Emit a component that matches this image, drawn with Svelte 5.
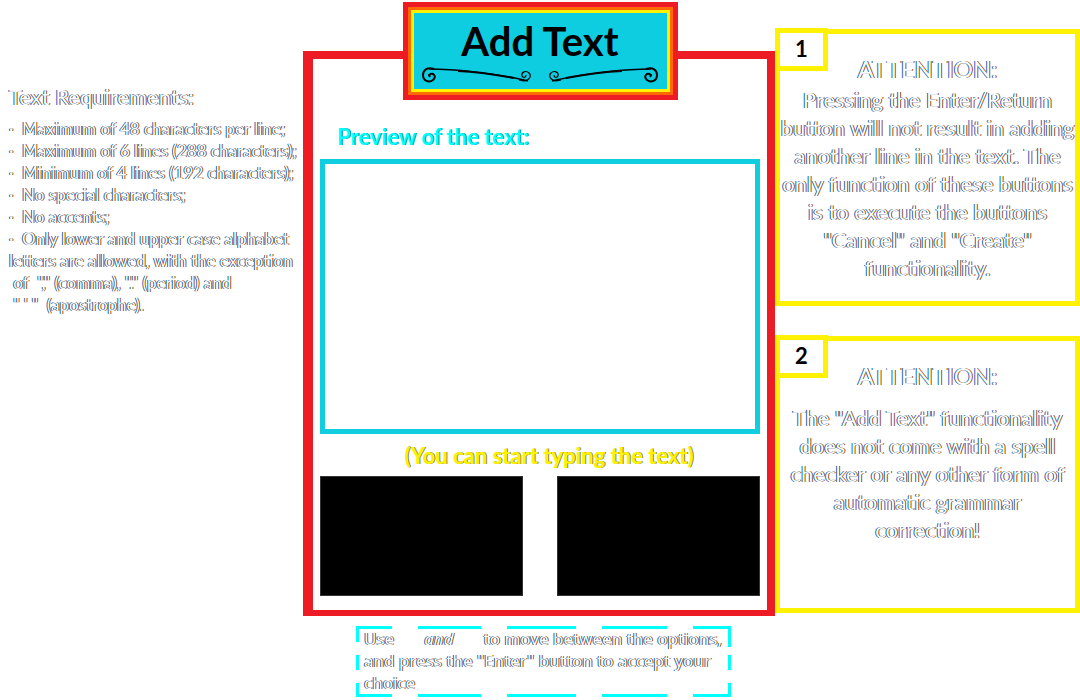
<script>
  const requirements = [
    ['·\u00a0\u00a0Maximum of 48 characters per line;'],
    ['·\u00a0\u00a0Maximum of 6 lines (288 characters);'],
    ['·\u00a0\u00a0Minimum of 4 lines (192 characters);'],
    ['·\u00a0\u00a0No special characters;'],
    ['·\u00a0\u00a0No accents;'],
    [
      '·\u00a0\u00a0Only lower and upper case alphabet',
      'letters are allowed, with the exception',
      '\u00a0of\u00a0 "," (comma), "." (period) and',
      '\u00a0" \' "\u00a0 (apostrophe).'
    ]
  ];
  const notices = [
    {
      number: 1,
      lines: [
        'Pressing the Enter/Return',
        'button will not result in adding',
        'another line in the text. The',
        'only function of these buttons',
        'is to execute the buttons',
        '"Cancel" and "Create"',
        'functionality.'
      ]
    },
    {
      number: 2,
      lines: [
        'The "Add Text" functionality',
        'does not come with a spell',
        'checker or any other form of',
        'automatic grammar',
        'correction!'
      ]
    }
  ];
  let text = $state('');
</script>

<main class="screen">
  <section class="requirements fringed">
    <h2>Text Requirements:</h2>
    <ul>
      {#each requirements as lines}
        <li>
          {#each lines as line}<span class="line">{line}</span>{/each}
        </li>
      {/each}
    </ul>
  </section>

  <div class="center">
    <section class="panel">
      <header class="title">
        <h1>Add Text</h1>
        <svg class="flourish" viewBox="0 0 236 16" fill="none" stroke="#000" aria-hidden="true">
          <g id="scroll">
            <path d="M7 2 C32 2 70 6 102 13 L106 14" stroke-width="1.5" />
            <path d="M36 4 C58 5 76 8 92 11" stroke-width="2" />
            <path d="M12 2 C5 0 1 3 1 8 C1 14 7 16 11 13 C15 9 11 5 7 8 L8 10" stroke-width="2" />
            <path d="M97 13 C107 16 110 9 107 6 C104 3 99 5 100 9 C101 11 104 11 104 8" stroke-width="1.2" />
          </g>
          <use href="#scroll" transform="translate(236 0) scale(-1 1)" />
        </svg>
      </header>
      <div class="body">
        <label class="preview-label" for="preview">Preview of the text:</label>
        <textarea id="preview" bind:value={text} maxlength="288"></textarea>
        <p class="prompt">(You can start typing the text)</p>
        <div class="actions">
          <button type="button" aria-label="Cancel"></button>
          <button type="button" aria-label="Create"></button>
        </div>
      </div>
    </section>
    <aside class="hint">
      <svg class="dashes" viewBox="0 0 375 71" preserveAspectRatio="none" fill="none" stroke="#00ffff" stroke-width="3" aria-hidden="true">
        <path d="M0 1.5H36M62 1.5H125M151 1.5H220M246 1.5H311M337 1.5H375" />
        <path d="M0 69.5H36M62 69.5H125M151 69.5H220M246 69.5H311M337 69.5H375" />
        <path d="M1.5 0V16M1.5 29V44M1.5 57V71M373.5 0V21M373.5 29V44M373.5 57V71" />
      </svg>
      <p class="fringed">
        <span class="line spread"><span>Use</span><em>and</em><span>to move between the options,</span></span>
        <span class="line">and press the "Enter" button to accept your</span>
        <span class="line">choice</span>
      </p>
    </aside>
  </div>

  <div class="notices">
    {#each notices as notice}
      <section class="notice">
        <span class="badge">{notice.number}</span>
        <div class="fringed copy" class:roomy={notice.number === 2}>
          <h2>ATTENTION:</h2>
          <p>
            {#each notice.lines as line}<span class="line">{line}</span>{/each}
          </p>
        </div>
      </section>
    {/each}
  </div>
</main>

<style>
  :global(body) {
    margin: 0;
    background: #fff;
  }
  .screen {
    display: grid;
    grid-template-columns: 303fr 472fr 305fr;
    font-family: Lato, "Open Sans", sans-serif;
    color: #000;
    overflow: hidden;
  }
  .screen > * {
    min-width: 0;
  }
  h1, h2, p, ul {
    margin: 0;
    padding: 0;
  }
  h2 {
    font-weight: 400;
  }
  .line {
    display: block;
    white-space: pre;
  }
  .fringed {
    color: #fff;
    text-shadow: -1px 0 #0f5fb0, 1px 0 #944a08;
  }
  .requirements {
    padding: 83px 0 0 9px;
  }
  .requirements h2 {
    font-size: 22px;
    line-height: 28px;
    margin-bottom: 7px;
  }
  .requirements ul {
    list-style: none;
    font-size: 17px;
    line-height: 22px;
  }
  .center {
    padding-top: 2px;
  }
  .panel {
    margin-top: 49px;
    border: 8px solid #ed1c24;
    border-width: 8px 8px 6px 10px;
  }
  .title {
    position: relative;
    box-sizing: border-box;
    width: 275px;
    height: 98px;
    margin: -57px auto 0;
    padding: 8px 0 0;
    background: #0ecde0;
    border: 5px solid #ed1c24;
    box-shadow: inset 0 0 0 3px #ff6a00, inset 0 0 0 6px #fff200;
    text-align: center;
  }
  .title h1 {
    font-size: 40px;
    line-height: 52px;
    font-weight: 700;
  }
  .flourish {
    display: block;
    width: 236px;
    height: 16px;
    margin: 0 auto;
  }
  .body {
    padding: 24px 7px 14px;
  }
  .preview-label {
    display: block;
    padding-left: 17px;
    font-size: 22px;
    line-height: 26px;
    font-weight: 700;
    color: #00ffff;
    text-shadow: 1px 0 #178fa3;
  }
  textarea {
    display: block;
    box-sizing: border-box;
    width: 100%;
    height: 275px;
    margin-top: 9px;
    padding: 12px;
    border: 5px solid #10cde0;
    background: #fff;
    font: inherit;
    resize: none;
    outline: 0;
  }
  .prompt {
    margin: 9px 0 7px;
    padding-left: 18px;
    font-size: 22px;
    line-height: 26px;
    font-weight: 700;
    text-align: center;
    color: #fff200;
    text-shadow: 1px 0 #77851c;
  }
  .actions {
    display: grid;
    grid-template-columns: 1fr 1fr;
    gap: 34px;
  }
  .actions button {
    height: 120px;
    padding: 0;
    border: 1px solid #333;
    background: #000;
  }
  .hint {
    position: relative;
    width: 375px;
    box-sizing: border-box;
    margin: 10px 0 0 53px;
    padding: 2px 9px 0 8px;
    height: 71px;
  }
  .dashes {
    position: absolute;
    inset: 0;
    width: 100%;
    height: 100%;
  }
  .hint p {
    font-family: "Noto Sans", "Open Sans", sans-serif;
    font-size: 17px;
    line-height: 22px;
  }
  .spread {
    display: flex;
    justify-content: space-between;
  }
  .notices {
    display: flex;
    flex-direction: column;
    gap: 30px;
    padding-top: 29px;
  }
  .notice {
    position: relative;
    box-sizing: border-box;
    min-height: 277px;
    border: 5px solid #fff200;
    padding-top: 20px;
  }
  .badge {
    position: absolute;
    top: -6px;
    left: -5px;
    box-sizing: border-box;
    width: 53px;
    height: 43px;
    border: 5px solid #fff200;
    background: #fff;
    text-align: center;
    font-size: 22px;
    line-height: 32px;
    font-weight: 700;
  }
  .copy {
    text-align: center;
  }
  .copy h2 {
    font-size: 24px;
    line-height: 30px;
  }
  .copy p {
    margin: 2px -5px 0;
    font-size: 22px;
    line-height: 28px;
  }
  .roomy p {
    margin-top: 13px;
  }
</style>
